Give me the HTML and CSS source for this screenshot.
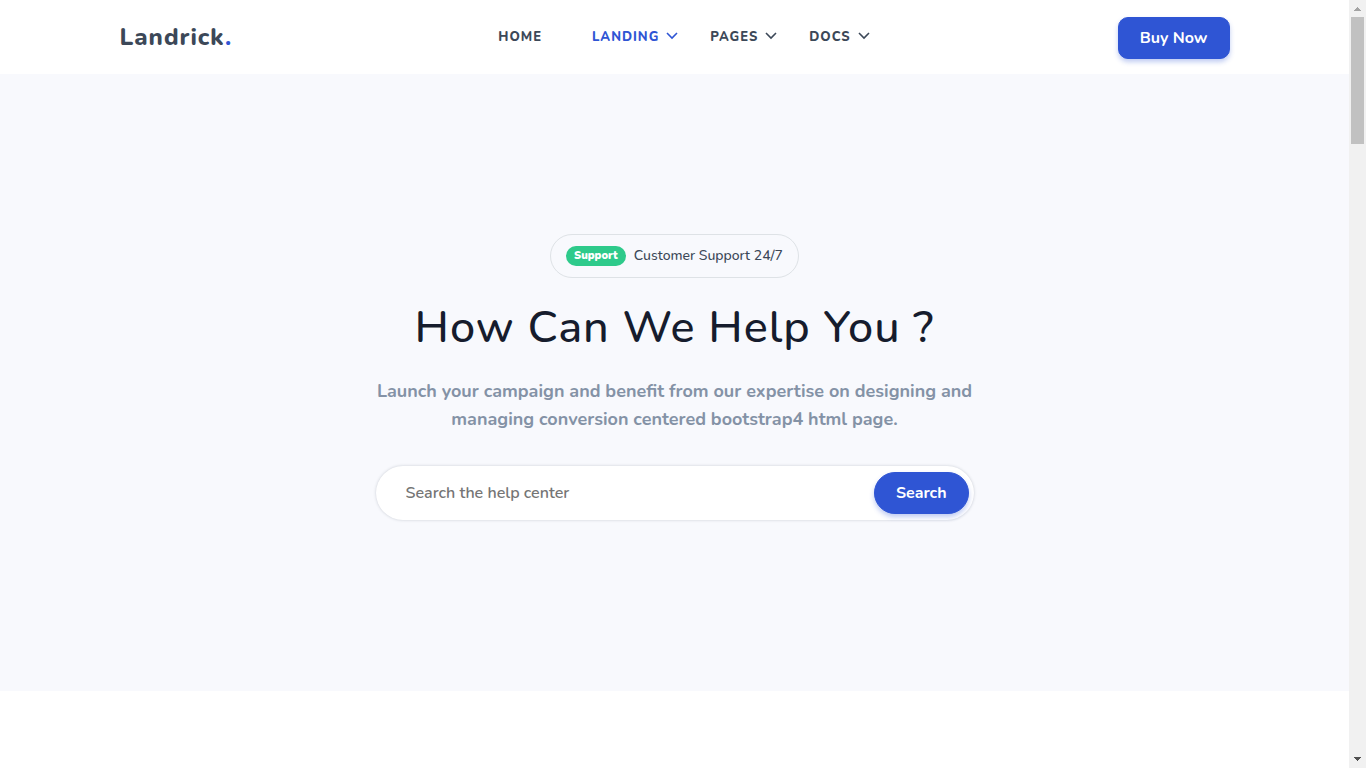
FILE: index.html
```
<!DOCTYPE html>
<html lang="en">
<head>
<meta charset="utf-8">
<meta name="viewport" content="width=device-width, initial-scale=1">
<title>Landrick - Help Center</title>
<link rel="stylesheet" href="styles.css">
</head>
<body>
<div class="page">
  <header class="topbar">
    <div class="container topbar-inner">
      <a class="logo" href="#">Landrick<span class="logo-dot">.</span></a>
      <nav class="nav" aria-label="Main">
        <a class="nav-link nav-home" href="#">Home</a>
        <a class="nav-link active" href="#">Landing<svg class="chevron" viewBox="0 0 12 8" aria-hidden="true"><path d="M1 1 6 6l5-5"/></svg></a>
        <a class="nav-link" href="#">Pages<svg class="chevron" viewBox="0 0 12 8" aria-hidden="true"><path d="M1 1 6 6l5-5"/></svg></a>
        <a class="nav-link" href="#">Docs<svg class="chevron" viewBox="0 0 12 8" aria-hidden="true"><path d="M1 1 6 6l5-5"/></svg></a>
      </nav>
      <div class="buy"><button class="btn" type="button">Buy Now</button></div>
    </div>
  </header>
  <main>
    <section class="hero">
      <div class="announce"><span class="badge">Support</span><span>Customer Support 24/7</span></div>
      <h1 class="heading">How Can We Help You ?</h1>
      <p class="intro">Launch your campaign and benefit from our expertise on designing and managing conversion centered bootstrap4 html page.</p>
      <form class="search">
        <input class="search-input" type="text" aria-label="Search the help center" placeholder="Search the help center">
        <button class="btn btn-pill" type="submit">Search</button>
      </form>
    </section>
  </main>
</div>
<div class="scrollbar" aria-hidden="true">
  <svg class="arrow arrow-up" viewBox="0 0 17 17" shape-rendering="crispEdges"><path d="M8 7h1v1h1v1h1v1h1v1H5v-1h1V9h1V8h1z"/></svg>
  <div class="track"><div class="thumb"></div></div>
  <svg class="arrow" viewBox="0 0 17 17" shape-rendering="crispEdges"><path d="M5 6h7v1h-1v1h-1v1H9v1H8V9H7V8H6V7H5z"/></svg>
</div>
</body>
</html>
```
FILE: styles.css
```
* {
  box-sizing: border-box;
}

body {
  margin: 0;
  min-height: 100vh;
  display: flex;
  background: #fff;
  color: #161c2d;
  font-family: Nunito, Lato, "Noto Sans", sans-serif;
  font-size: 16px;
}

.page {
  flex: 1;
  min-width: 0;
}

.container {
  max-width: 1140px;
  margin: 0 auto;
  padding: 0 15px;
}

.topbar-inner {
  display: grid;
  grid-template-columns: 1fr auto 1fr;
  align-items: center;
  min-height: 74px;
}

.logo {
  font-size: 24px;
  font-weight: 800;
  letter-spacing: 1px;
  color: #3c4858;
  text-decoration: none;
}

.logo-dot {
  color: #2f55d4;
}

.nav {
  display: flex;
  gap: 32px;
  padding-left: 19px;
}

.nav-link {
  display: flex;
  align-items: center;
  gap: 7px;
  font-size: 13px;
  font-weight: 800;
  line-height: 24px;
  letter-spacing: 1px;
  text-transform: uppercase;
  text-decoration: none;
  color: #3c4858;
}

.nav-home {
  margin-right: 18px;
}

.nav-link.active {
  color: #2f55d4;
}

.chevron {
  width: 12px;
  height: 8px;
  margin-bottom: 2px;
  fill: none;
  stroke: currentColor;
  stroke-width: 1.6;
}

.buy {
  padding-top: 2px;
  text-align: right;
}

.btn {
  padding: 8px 21px;
  border: 1px solid #2f55d4;
  border-radius: 10px;
  background: #2f55d4;
  box-shadow: 0 3px 5px rgba(47, 85, 212, 0.3);
  color: #fff;
  font-family: inherit;
  font-size: 16px;
  font-weight: 700;
  line-height: 24px;
}

.hero {
  display: flex;
  flex-direction: column;
  align-items: center;
  padding: 160px 15px 171px;
  background: #f8f9fd;
  text-align: center;
}

.announce {
  display: flex;
  align-items: center;
  gap: 8px;
  padding: 9px 15px;
  border: 1px solid #dee2e6;
  border-radius: 30px;
  font-size: 14px;
  font-weight: 500;
  line-height: 24px;
  color: #3c4858;
}

.badge {
  padding: 0 8px;
  border-radius: 10px;
  background: #2eca8b;
  color: #fff;
  font-size: 11px;
  font-weight: 900;
  line-height: 20px;
}

.heading {
  margin: 20px 0 19px;
  font-size: 45px;
  font-weight: 500;
  line-height: 60px;
  letter-spacing: 1px;
}

.intro {
  max-width: 600px;
  margin: 0 0 33px;
  font-size: 18px;
  font-weight: 700;
  line-height: 28px;
  color: #8492a6;
}

.search {
  display: flex;
  align-items: center;
  width: 100%;
  max-width: 598px;
  padding: 5px;
  border-radius: 30px;
  background: #fff;
  box-shadow: 0 0 3px rgba(60, 72, 88, 0.25);
}

.search-input {
  flex: 1;
  min-width: 0;
  padding: 10px 25px;
  border: 0;
  outline: 0;
  background: transparent;
  color: #3c4858;
  font-family: inherit;
  font-size: 16px;
  font-weight: 600;
  line-height: 24px;
}

.search-input::placeholder {
  color: #757575;
}

.btn-pill {
  border-radius: 30px;
}

.scrollbar {
  position: sticky;
  top: 0;
  flex: none;
  display: flex;
  flex-direction: column;
  width: 17px;
  height: 100vh;
  background: #f1f1f1;
}

.arrow {
  flex: none;
  width: 17px;
  height: 17px;
  fill: #505050;
}

.arrow-up {
  fill: #a3a3a3;
}

.track {
  flex: 1;
  padding: 0 2px;
}

.thumb {
  height: 17.3%;
  background: #c1c1c1;
}
```
